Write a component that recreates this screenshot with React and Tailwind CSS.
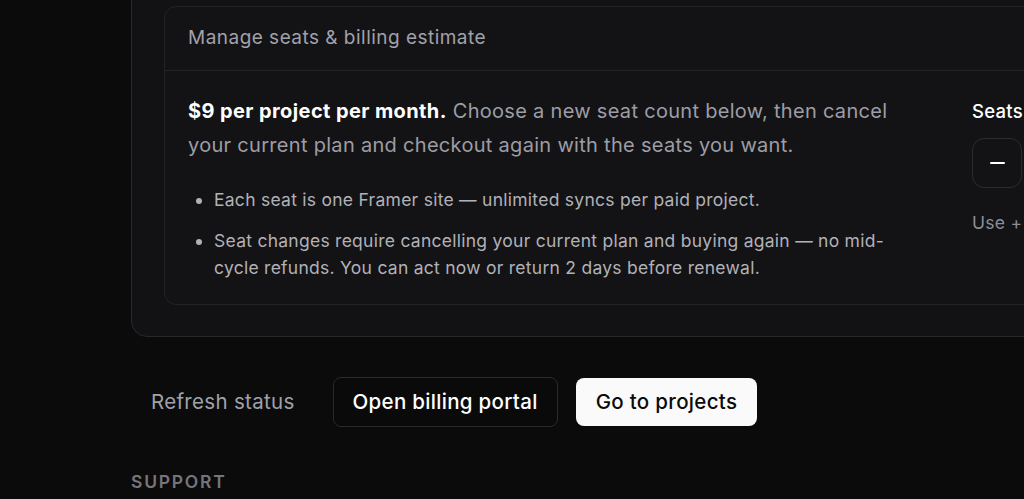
export default function App() {
  return (
    <div
      className="h-[499px] w-full overflow-hidden bg-[#0b0b0c] text-white"
      style={{ fontFamily: 'Inter, "Noto Sans", sans-serif' }}
    >
      <div className="pl-[131px]">
        {/* plan card, top cut off by the viewport */}
        <div className="-mt-[27px] w-[1100px] rounded-2xl border border-[#28282a] bg-[#121214] px-8 pb-[31px] pt-8">
          <div className="rounded-xl border border-[#232325] bg-[#131315]">
            <div className="flex h-[64px] items-center border-b border-[#232325] pl-[23px] pr-6 text-[19px] tracking-[0.025em] text-[#a1a1aa]">
              Manage seats &amp; billing estimate
            </div>
            <div className="flex gap-[63px] pb-[23px] pl-[23px] pr-6 pt-[23px]">
              <div className="w-[721px] shrink-0">
                <p className="text-[20px] leading-[34px] tracking-[0.015em] text-[#9d9da5]">
                  <span className="font-bold tracking-[0.02em] text-white">$9 per project per month.</span>{' '}
                  Choose a new seat count below, then cancel your current plan and checkout again with the seats you want.
                </p>
                <ul className="mt-6 flex list-disc flex-col gap-[14px] pl-[26px] text-[17.5px] leading-[27px] tracking-[0.015em] text-[#b1b1b8] marker:text-[#b1b1b8]">
                  <li>Each seat is one Framer site — unlimited syncs per paid project.</li>
                  <li>
                    Seat changes require cancelling your current plan and buying again — no mid-cycle refunds. You can act now or return 2 days before renewal.
                  </li>
                </ul>
              </div>
              <div className="flex w-[300px] shrink-0 flex-col">
                <div className="text-[18.5px] font-medium leading-[34px] tracking-[0.015em] text-white">Seats</div>
                <div className="mt-[10px] flex items-center gap-3">
                  <button className="flex h-[50px] w-[50px] items-center justify-center rounded-xl border border-[#2c2c2f] bg-[#131315]">
                    <span className="block h-[2px] w-[15px] rounded bg-white" />
                  </button>
                  <div className="h-[50px] w-[90px] rounded-xl border border-[#2c2c2f]" />
                </div>
                <div className="mt-[22px] text-[17.5px] tracking-[0.015em] text-[#8d8d95]">Use + and − to choose seats.</div>
              </div>
            </div>
          </div>
        </div>

        <div className="mt-[40px] flex items-center gap-[18px] text-[20.5px] tracking-[0.015em]">
          <button className="h-[50px] px-5 text-[#a1a1aa]">Refresh status</button>
          <button className="h-[50px] rounded-lg border border-[#2a2a2d] bg-[#0a0a0b] px-[19px] font-medium text-white">
            Open billing portal
          </button>
          <button className="h-[48px] rounded-lg bg-[#fafafa] px-5 font-medium text-[#0a0a0b]">
            Go to projects
          </button>
        </div>

        <div className="mt-[42px] text-[17.5px] font-semibold uppercase tracking-[0.1em] text-[#75757c]">
          Support
        </div>
      </div>
    </div>
  );
}
